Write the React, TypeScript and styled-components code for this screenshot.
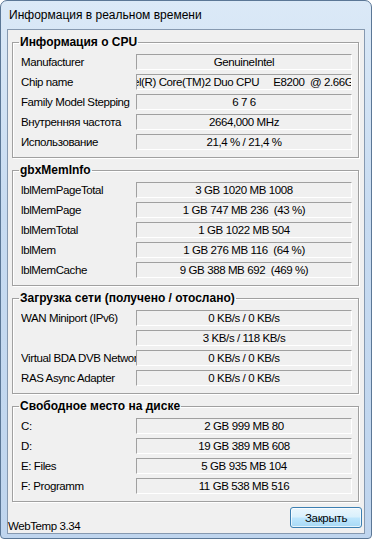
import React from "react";
import styled, { createGlobalStyle } from "styled-components";

const GlobalStyle = createGlobalStyle`
  html, body {
    margin: 0;
    padding: 0;
    background: #ffffff;
  }
  * {
    box-sizing: border-box;
  }
`;

const uiFont = `"Liberation Sans", Arial, sans-serif`;

const Window = styled.div`
  width: 372px;
  height: 539px;
  border: 1px solid #5b7796;
  border-radius: 7px 7px 4px 4px;
  background: linear-gradient(180deg, #dbe9f7 0%, #c7dbf1 40%, #bfd5ee 100%);
  padding: 0 6px 4px 6px;
  display: flex;
  flex-direction: column;
  overflow: hidden;
`;

const TitleBar = styled.div`
  height: 28px;
  display: flex;
  align-items: center;
  padding-left: 2px;
  font-family: ${uiFont};
  font-size: 12px;
  color: #000;
`;

const Client = styled.div`
  flex: 1;
  background: #f0f0f0;
  border: 1px solid #8699b0;
  padding: 5px 5px 0 4px;
  display: flex;
  flex-direction: column;
  gap: 5px;
  font-family: ${uiFont};
  font-size: 11.5px;
  letter-spacing: -0.4px;
  color: #000;
`;

const Group = styled.fieldset`
  margin: 0;
  min-width: 0;
  border: 1px solid #a0a0a0;
  box-shadow: 1px 1px 0 #ffffff, inset 1px 1px 0 #ffffff;
  padding: 5px 5px 7px 8px;
  display: flex;
  flex-direction: column;
  gap: 4px;
`;

const Legend = styled.legend`
  font-weight: bold;
  font-size: 12px;
  letter-spacing: 0;
  line-height: 14px;
  padding: 0 1px;
  margin-left: -2px;
`;

const Row = styled.div`
  display: grid;
  grid-template-columns: 115px 216px;
  height: 16px;
  align-items: center;
`;

const Label = styled.span`
  white-space: nowrap;
  overflow: hidden;
  line-height: 16px;
`;

const Value = styled.div`
  height: 16px;
  border: 1px solid;
  border-color: #a0a0a0 #ffffff #ffffff #a0a0a0;
  display: flex;
  justify-content: center;
  align-items: center;
  overflow: hidden;
  white-space: pre;
  line-height: 14px;
`;

const Footer = styled.div`
  flex: 1;
  display: flex;
  justify-content: space-between;
  align-items: flex-end;
`;

const Version = styled.span`
  line-height: 13px;
  margin-left: -4px;
  margin-bottom: 0;
`;

const CloseButton = styled.button`
  width: 72px;
  height: 21px;
  margin: 0 -3px 5px 0;
  border: 1px solid #3c7fb1;
  border-radius: 3px;
  background: linear-gradient(180deg, #eaf6fd 0%, #d9f0fc 48%, #bee6fd 52%, #a7d9f5 100%);
  box-shadow: inset 0 0 0 1px rgba(255, 255, 255, 0.7);
  font-family: ${uiFont};
  font-size: 11.5px;
  letter-spacing: -0.3px;
  color: #000;
  padding: 0;
`;

type Item = { label: string; value: string };

const groups: { title: string; items: Item[] }[] = [
  {
    title: "Информация о CPU",
    items: [
      { label: "Manufacturer", value: "GenuineIntel" },
      { label: "Chip name", value: "Intel(R) Core(TM)2 Duo CPU     E8200  @ 2.66GHz" },
      { label: "Family Model Stepping", value: "6 7 6" },
      { label: "Внутренняя частота", value: "2664,000 MHz" },
      { label: "Использование", value: "21,4 % / 21,4 %" },
    ],
  },
  {
    title: "gbxMemInfo",
    items: [
      { label: "lblMemPageTotal", value: "3 GB 1020 MB 1008" },
      { label: "lblMemPage", value: "1 GB 747 MB 236  (43 %)" },
      { label: "lblMemTotal", value: "1 GB 1022 MB 504" },
      { label: "lblMem", value: "1 GB 276 MB 116  (64 %)" },
      { label: "lblMemCache", value: "9 GB 388 MB 692  (469 %)" },
    ],
  },
  {
    title: "Загрузка сети (получено / отослано)",
    items: [
      { label: "WAN Miniport (IPv6)", value: "0 KB/s / 0 KB/s" },
      { label: "", value: "3 KB/s / 118 KB/s" },
      { label: "Virtual BDA DVB Network Interface", value: "0 KB/s / 0 KB/s" },
      { label: "RAS Async Adapter", value: "0 KB/s / 0 KB/s" },
    ],
  },
  {
    title: "Свободное место на диске",
    items: [
      { label: "C:", value: "2 GB 999 MB 80" },
      { label: "D:", value: "19 GB 389 MB 608" },
      { label: "E: Files", value: "5 GB 935 MB 104" },
      { label: "F: Programm", value: "11 GB 538 MB 516" },
    ],
  },
];

export default function App() {
  return (
    <>
      <GlobalStyle />
      <Window>
        <TitleBar>Информация в реальном времени</TitleBar>
        <Client>
          {groups.map((g) => (
            <Group key={g.title}>
              <Legend>{g.title}</Legend>
              {g.items.map((it, i) => (
                <Row key={i}>
                  <Label>{it.label}</Label>
                  <Value>{it.value}</Value>
                </Row>
              ))}
            </Group>
          ))}
          <Footer>
            <Version>WebTemp 3.34</Version>
            <CloseButton>Закрыть</CloseButton>
          </Footer>
        </Client>
      </Window>
    </>
  );
}
